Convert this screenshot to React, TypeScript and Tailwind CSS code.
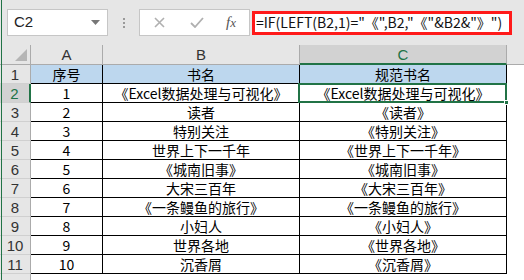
import React from "react";

const rows: [string, string, string][] = [
  ["序号", "书名", "规范书名"],
  ["1", "《Excel数据处理与可视化》", "《Excel数据处理与可视化》"],
  ["2", "读者", "《读者》"],
  ["3", "特别关注", "《特别关注》"],
  ["4", "世界上下一千年", "《世界上下一千年》"],
  ["5", "《城南旧事》", "《城南旧事》"],
  ["6", "大宋三百年", "《大宋三百年》"],
  ["7", "《一条鳗鱼的旅行》", "《一条鳗鱼的旅行》"],
  ["8", "小妇人", "《小妇人》"],
  ["9", "世界各地", "《世界各地》"],
  ["10", "沉香屑", "《沉香屑》"],
];

const font = { fontFamily: '"Noto Sans CJK SC", "Noto Sans", sans-serif' };

export default function App() {
  return (
    <div className="relative w-[524px] h-[280px] overflow-hidden bg-white" style={font}>
      {/* formula bar */}
      <div className="flex h-[45px] items-center bg-[#e6e6e6]">
        <div className="ml-[7px] flex h-[27px] w-[101px] items-center justify-between border border-[#c6c6c6] bg-white pl-[6px] pr-[7px] text-[15px] text-[#222]">
          <span style={{ fontFamily: '"Liberation Sans", sans-serif' }}>C2</span>
          <svg width="9" height="5" viewBox="0 0 9 5"><path d="M0 0h9L4.5 5z" fill="#777" /></svg>
        </div>
        <div className="ml-[15px] flex flex-col gap-[2px]">
          <div className="h-[2px] w-[2px] bg-[#999]" />
          <div className="h-[2px] w-[2px] bg-[#999]" />
          <div className="h-[2px] w-[2px] bg-[#999]" />
        </div>
        <div className="ml-[14px] flex h-[27px] w-[111px] items-center border border-[#c6c6c6] bg-white">
          <svg className="ml-[14px]" width="11" height="11" viewBox="0 0 11 11">
            <path d="M1 1L10 10M10 1L1 10" stroke="#b0b0b0" strokeWidth="1.6" />
          </svg>
          <svg className="ml-[25px]" width="14" height="11" viewBox="0 0 14 11">
            <path d="M1 6L5 10L13 1" stroke="#b0b0b0" strokeWidth="1.8" fill="none" />
          </svg>
          <span className="ml-[22px] italic text-[15px] text-[#555]" style={{ fontFamily: '"Liberation Serif", serif' }}>
            f<span className="text-[13px]">x</span>
          </span>
        </div>
        <div className="ml-[2px] flex h-[24px] w-[260px] items-center border-[3px] border-[#ff1a1a] bg-white pl-[1px] text-[14px] text-[#111] whitespace-nowrap">
          =IF(LEFT(B2,1)="《",B2,"《"&amp;B2&amp;"》")
        </div>
      </div>

      {/* header row */}
      <div className="flex h-[20px] bg-[#e6e6e6] text-[15px] text-[#333]">
        <div className="relative w-[31px] border-r border-b border-[#ababab]">
          <svg className="absolute right-[3px] bottom-[3px]" width="12" height="12" viewBox="0 0 12 12">
            <path d="M12 0V12H0z" fill="#b5b5b5" />
          </svg>
        </div>
        <div className="flex w-[72px] items-center justify-center border-r border-b border-[#ababab] leading-none" style={{ fontFamily: '"Liberation Sans", sans-serif' }}>A</div>
        <div className="flex w-[197px] items-center justify-center border-r border-b border-[#ababab] leading-none" style={{ fontFamily: '"Liberation Sans", sans-serif' }}>B</div>
        <div className="flex w-[207px] items-center justify-center border-r border-[#ababab] border-b-2 border-b-[#217346] bg-[#d2d2d2] leading-none text-[#217346]" style={{ fontFamily: '"Liberation Sans", sans-serif' }}>C</div>
        <div className="flex-1 border-b border-[#ababab]" />
      </div>

      {/* rows */}
      {rows.map((r, i) => {
        const sel = i === 1;
        const head = i === 0;
        return (
          <div key={i} className="flex h-[19px]">
            <div
              className={
                sel
                  ? "flex w-[31px] items-center justify-center border-r-2 border-r-[#217346] border-b border-b-[#d0d0d0] bg-[#d2d2d2] text-[15px] leading-none text-[#217346]"
                  : "flex w-[31px] items-center justify-center border-r border-r-[#ababab] border-b border-b-[#d0d0d0] bg-[#e6e6e6] text-[15px] leading-none text-[#333]"
              }
              style={{ fontFamily: '"Liberation Sans", sans-serif' }}
            >
              {i + 1}
            </div>
            <div className={(head ? "bg-[#bdd7ee] " : "") + "flex w-[72px] items-center justify-center border-r border-b border-black text-[14px] leading-none text-black"}>{r[0]}</div>
            <div className={(head ? "bg-[#bdd7ee] " : "") + "flex w-[197px] items-center justify-center border-r border-b border-black text-[14px] leading-none text-black whitespace-nowrap"}>{r[1]}</div>
            <div className={(head ? "bg-[#bdd7ee] " : "") + "flex w-[207px] items-center justify-center border-r border-b border-black text-[14px] leading-none text-black whitespace-nowrap"}>{r[2]}</div>
            <div className="flex-1" />
          </div>
        );
      })}
      <div className="flex h-[10px]">
        <div className="w-[31px] border-r border-[#ababab] bg-[#e6e6e6]" />
      </div>

      {/* selection box C2 */}
      <div className="absolute left-[298px] top-[83px] h-[20px] w-[209px] border-2 border-[#217346]" />
      <div className="absolute left-[504px] top-[100px] h-[5px] w-[5px] border border-white bg-[#217346]" />

      {/* left window edge */}
      <div className="absolute left-[1px] top-0 h-[280px] w-[1px] bg-[#217346]" />
    </div>
  );
}
